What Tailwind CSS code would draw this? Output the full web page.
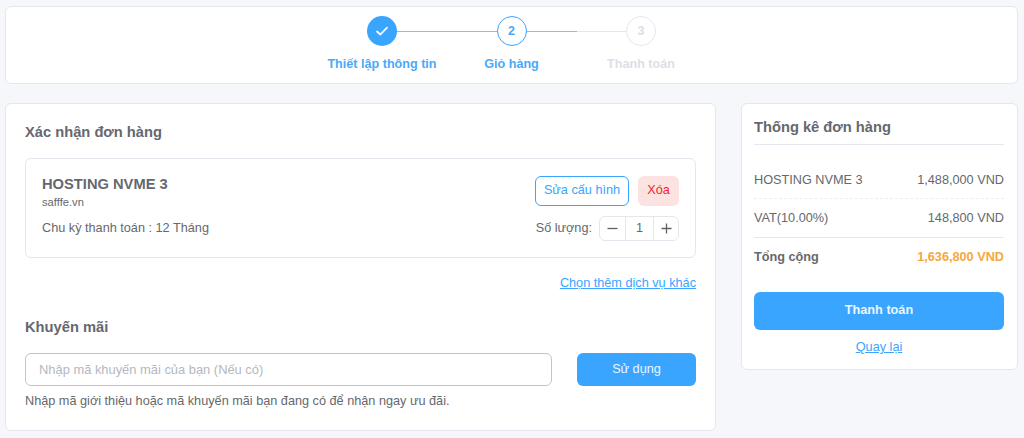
<!DOCTYPE html>
<html lang="en">
<head>
  <meta charset="UTF-8" />
  <title>Xác nhận đơn hàng</title>
  <script src="https://cdn.jsdelivr.net/npm/@tailwindcss/browser@4"></script>
</head>
<body class="bg-[#f5f7fa] font-['Liberation_Sans',Arial,sans-serif] text-[#65686e] h-[438px] overflow-hidden">
  <div class="pl-[5px] pr-[6px] pt-[6px]">
    <!-- Steps -->
    <div class="h-[78px] bg-white border border-[#e4e7ed] rounded-md flex justify-center pt-[9px]">
      <div class="w-[129.5px] flex flex-col items-center relative">
        <div class="absolute left-[65px] w-[130px] top-[14.5px] h-[1.5px] bg-[#7cc3fc]"></div>
        <div class="relative w-[30px] h-[30px] rounded-full bg-[#39a5ff] flex items-center justify-center">
          <svg width="14" height="14" viewBox="0 0 14 14" fill="none" stroke="white" stroke-width="1.8" stroke-linecap="round" stroke-linejoin="round"><path d="M2 7.5l3.4 3L12 3.6"/></svg>
        </div>
        <div class="mt-[10px] text-[12.6px] leading-[16px] font-bold text-[#4aa9f8] whitespace-nowrap">Thiết lập thông tin</div>
      </div>
      <div class="w-[129.5px] flex flex-col items-center relative">
        <div class="absolute left-[65px] w-[65px] top-[14.5px] h-[1.5px] bg-[#7cc3fc]"></div>
        <div class="absolute left-[130px] w-[65px] top-[15px] h-[1px] bg-[#e4e7ed]"></div>
        <div class="relative w-[30px] h-[30px] rounded-full bg-white border border-[#39a5ff] flex items-center justify-center text-[12.6px] font-bold text-[#4aa9f8]">2</div>
        <div class="mt-[10px] text-[12.6px] leading-[16px] font-bold text-[#4aa9f8] whitespace-nowrap">Giỏ hàng</div>
      </div>
      <div class="w-[129.5px] flex flex-col items-center relative">
        <div class="relative w-[30px] h-[30px] rounded-full bg-white border border-[#e4e7ed] flex items-center justify-center text-[12.6px] font-bold text-[#dcdfe6]">3</div>
        <div class="mt-[10px] text-[12.6px] leading-[16px] font-bold text-[#dcdfe6] whitespace-nowrap">Thanh toán</div>
      </div>
    </div>

    <div class="flex items-start justify-between mt-[19px]">
      <!-- Left column -->
      <div class="w-[711px] h-[328px] bg-white border border-[#e4e7ed] rounded-md px-[19px] pt-[19px]">
        <h2 class="text-[14.7px] leading-[18px] font-bold">Xác nhận đơn hàng</h2>

        <div class="mt-[17px] h-[100px] border border-[#e4e7ed] rounded-md px-[16px] pt-[17px] flex justify-between">
          <div>
            <div class="text-[14.7px] leading-[17px] font-bold">HOSTING NVME 3</div>
            <div class="text-[11.2px] leading-[14px] mt-[2px]">safffe.vn</div>
            <div class="text-[12.7px] leading-[16px] mt-[11px]">Chu kỳ thanh toán : 12 Tháng</div>
          </div>
          <div class="flex flex-col items-end">
            <div class="flex gap-[9px]">
              <button class="h-[30px] w-[94px] border border-[#39a5ff] rounded-md text-[12.7px] text-[#39a5ff] bg-white">Sửa cấu hình</button>
              <button class="h-[30px] w-[41px] rounded-md text-[12.7px] text-[#f5222d] bg-[#fde2e2]">Xóa</button>
            </div>
            <div class="flex items-center mt-[10px]">
              <span class="text-[12.7px] mr-[7px]">Số lượng:</span>
              <div class="flex h-[25px] w-[80px] border border-[#e4e7ed] rounded-md items-center">
                <div class="w-[26px] h-full border-r border-[#e4e7ed] flex items-center justify-center">
                  <svg width="11" height="11" viewBox="0 0 11 11" stroke="#606266" stroke-width="1.3"><path d="M0.5 5.5h10"/></svg>
                </div>
                <div class="flex-1 text-center text-[12.7px]">1</div>
                <div class="w-[25px] h-full border-l border-[#e4e7ed] flex items-center justify-center">
                  <svg width="11" height="11" viewBox="0 0 11 11" stroke="#606266" stroke-width="1.3"><path d="M0.5 5.5h10M5.5 0.5v10"/></svg>
                </div>
              </div>
            </div>
          </div>
        </div>

        <div class="text-right mt-[17px] text-[12.7px] leading-[16px]"><a href="#" class="text-[#39a5ff] underline">Chọn thêm dịch vụ khác</a></div>

        <h2 class="mt-[27px] text-[14.7px] leading-[18px] font-bold">Khuyến mãi</h2>
        <div class="flex justify-between mt-[17px]">
          <input class="w-[527px] h-[33px] border border-[#c0c4cc] rounded-md px-[13px] text-[12.9px] placeholder:text-[#b4b8c0] outline-none" placeholder="Nhập mã khuyến mãi của bạn (Nếu có)" />
          <button class="w-[119px] h-[33px] rounded-md bg-[#39a5ff] text-white/90 text-[12.7px]">Sử dụng</button>
        </div>
        <p class="mt-[7px] text-[12.7px] leading-[16px]">Nhập mã giới thiệu hoặc mã khuyến mãi bạn đang có để nhận ngay ưu đãi.</p>
      </div>

      <!-- Right column -->
      <div class="w-[277px] h-[267px] bg-white border border-[#e4e7ed] rounded-md pl-[12px] pr-[13px] pt-[14px]">
        <h2 class="text-[14.7px] leading-[18px] font-bold pb-[8px] border-b border-[#e4e7ed]">Thống kê đơn hàng</h2>
        <div class="mt-[15px] flex justify-between h-[39px] text-[12.7px] leading-[16px] border-b border-dashed border-[#ebeef5] pt-[12px]">
          <span>HOSTING NVME 3</span><span>1,488,000 VND</span>
        </div>
        <div class="flex justify-between h-[39px] text-[12.7px] leading-[16px] border-b border-[#e4e7ed] pt-[11px]">
          <span>VAT(10.00%)</span><span>148,800 VND</span>
        </div>
        <div class="flex justify-between h-[38px] text-[12.7px] leading-[16px] font-bold pt-[11px]">
          <span>Tổng cộng</span><span class="text-[#f5a742]">1,636,800 VND</span>
        </div>
        <button class="mt-[16px] w-full h-[38px] rounded-md bg-[#39a5ff] text-white/90 text-[12.7px] font-bold">Thanh toán</button>
        <div class="text-center mt-[9px] text-[12.7px] leading-[16px]"><a href="#" class="text-[#39a5ff] underline">Quay lại</a></div>
      </div>
    </div>
  </div>
</body>
</html>
